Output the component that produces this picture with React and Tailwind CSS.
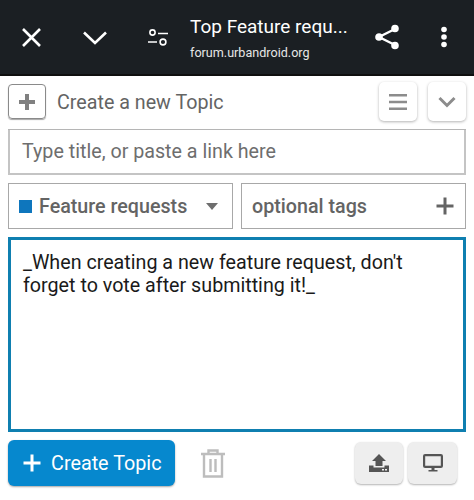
import React from "react";

function GhostButton({ children }) {
    return (
        <div className="w-[38px] h-[39px] rounded-[5px] bg-white shadow-[0_1px_3px_rgba(0,0,0,0.3)] flex items-center justify-center">
            {children}
        </div>
    );
}

function UploadButton({ children, className }) {
    return (
        <div className={"h-[42px] rounded-[6px] bg-[#eeeeee] shadow-[0_1px_2px_rgba(0,0,0,0.3)] flex items-center justify-center " + className}>
            {children}
        </div>
    );
}

export default function App() {
    return (
        <div className="w-[474px] h-[500px] bg-white overflow-hidden font-['Roboto',sans-serif]">
            <header className="h-[76px] bg-[#1b1f23] border-b-2 border-[#0f0f0f] flex items-center text-white">
                <svg width="19" height="19" viewBox="0 0 19 19" className="ml-[22px] mt-[1px]" fill="none" stroke="white" strokeWidth="2.6">
                    <path d="M1 1L18 18M18 1L1 18" />
                </svg>
                <svg width="24" height="14" viewBox="0 0 24 14" className="ml-[42px] mt-[1px]" fill="none" stroke="white" strokeWidth="2.6">
                    <path d="M1 1.5L12 12L23 1.5" />
                </svg>
                <svg width="20" height="17" viewBox="0 0 20 17" className="ml-[41px]" fill="none" stroke="white" strokeWidth="1.6">
                    <circle cx="4.5" cy="3.5" r="2.6" />
                    <path d="M10 4.5H20M0 13H9" />
                    <circle cx="15" cy="13" r="2.9" />
                </svg>
                <div className="ml-[22px] mt-[3px] w-[170px] flex flex-col">
                    <div className="text-[19px] leading-[24px] whitespace-nowrap">Top Feature requ...</div>
                    <div className="text-[12.6px] leading-[20px] mt-[4px] text-[#e6e6e6] whitespace-nowrap">forum.urbandroid.org</div>
                </div>
                <svg width="26" height="28" viewBox="0 0 26 28" className="ml-[14px]" fill="white" stroke="white" strokeWidth="2.4">
                    <path d="M21 6L5 14L21 22" fill="none" />
                    <circle cx="21" cy="5.5" r="2.6" />
                    <circle cx="5" cy="14" r="2.6" />
                    <circle cx="21" cy="22.5" r="2.6" />
                </svg>
                <svg width="8" height="22" viewBox="0 0 8 22" className="ml-[40px]" fill="white">
                    <circle cx="4" cy="3.5" r="2.8" />
                    <circle cx="4" cy="11" r="2.8" />
                    <circle cx="4" cy="18.5" r="2.8" />
                </svg>
            </header>

            <div className="px-2">
                <div className="h-[54px] border-b border-[#b5b5b5] flex items-center">
                    <div className="w-[38px] h-[35px] mb-[2px] rounded-[4px] border border-[#8a8a8a] shadow-[0_1px_1px_rgba(0,0,0,0.35)] flex items-center justify-center">
                        <svg width="18" height="18" viewBox="0 0 18 18" fill="#808080">
                            <path d="M7 1h4v6h6v4h-6v6H7v-6H1V7h6z" />
                        </svg>
                    </div>
                    <span className="ml-[11px] text-[19.7px] text-[#646464]">Create a new Topic</span>
                    <div className="ml-auto mb-[2px] flex gap-[11px]">
                        <GhostButton>
                            <svg width="18" height="16" viewBox="0 0 18 16" fill="#8c8c8c">
                                <path d="M0 0h18v2.6H0zM0 6.7h18v2.6H0zM0 13.4h18V16H0z" />
                            </svg>
                        </GhostButton>
                        <GhostButton>
                            <svg width="18" height="12" viewBox="0 0 18 12" fill="none" stroke="#8c8c8c" strokeWidth="3">
                                <path d="M1.5 2L9 9.5L16.5 2" />
                            </svg>
                        </GhostButton>
                    </div>
                </div>

                <div className="h-[45px] border-2 border-t-0 border-[#c4c4c4] flex items-center pl-[12px] pt-[1px] text-[19.7px] text-[#6e6e6e]">
                    Type title, or paste a link here
                </div>

                <div className="mt-[8px] flex gap-[8px]">
                    <div className="w-[225px] h-[46px] border border-[#a8a8a8] flex items-center pl-[10px] pr-[14px]">
                        <span className="w-[13px] h-[13px] bg-[#0e76bd]" />
                        <span className="ml-[7px] pt-[1px] text-[19.7px] font-medium text-[#646464]">Feature requests</span>
                        <svg width="12" height="7" viewBox="0 0 12 7" className="ml-auto" fill="#6e6e6e">
                            <path d="M0 0h12L6 7z" />
                        </svg>
                    </div>
                    <div className="flex-1 h-[46px] border border-[#a8a8a8] flex items-center pl-[10px] pr-[11px]">
                        <span className="pt-[1px] text-[19.7px] font-medium text-[#646464]">optional tags</span>
                        <svg width="18" height="18" viewBox="0 0 18 18" className="ml-auto" fill="#646464">
                            <path d="M7.5 0.5h3v7h7v3h-7v7h-3v-7h-7v-3h7z" />
                        </svg>
                    </div>
                </div>

                <div className="mt-[8px] h-[195px] border-[3px] border-[#0f7fb0] pl-[12px] pt-[11px] text-[19.7px] leading-[23px] text-[#1a1a1a]">
                    _When creating a new feature request, don't
                    <br />
                    forget to vote after submitting it!_
                </div>

                <div className="mt-[8px] flex items-center">
                    <div className="w-[167px] h-[46px] rounded-[6px] bg-[#0688ce] shadow-[0_1px_2px_rgba(0,0,0,0.35)] flex items-center pl-[15px] text-white">
                        <svg width="18" height="18" viewBox="0 0 18 18" fill="white">
                            <path d="M7.5 0.5h3v7h7v3h-7v7h-3v-7h-7v-3h7z" />
                        </svg>
                        <span className="ml-[10px] pt-[1px] text-[19.8px]">Create Topic</span>
                    </div>
                    <svg width="24" height="29" viewBox="0 0 24 29" className="ml-[26px]" fill="none" stroke="#bdbdbd" strokeWidth="2.4">
                        <path d="M0 5H24M7.5 5V1.5h9V5M3 5V27.5H21V5M9.5 10V23M14.5 10V23" />
                    </svg>
                    <div className="ml-auto mr-[9px] mt-[-1px] flex gap-[5px]">
                        <UploadButton className="w-[48px]">
                            <svg width="20" height="18" viewBox="0 0 20 18" fill="#555555">
                                <path d="M10 0L17 7H13.5V12H6.5V7H3zM0 11.5H4.5V13.5H15.5V11.5H20V18H0z" />
                                <path d="M13 15h2v1.5h-2zM16 15h2v1.5h-2z" fill="#eeeeee" />
                            </svg>
                        </UploadButton>
                        <UploadButton className="w-[49px]">
                            <svg width="20" height="18" viewBox="0 0 20 18" fill="none">
                                <rect x="1.1" y="1.1" width="17.8" height="11.8" rx="1" stroke="#555555" strokeWidth="2.2" />
                                <path d="M8.5 14h3v2h3v1.5h-9V16h3z" fill="#555555" />
                            </svg>
                        </UploadButton>
                    </div>
                </div>
            </div>
        </div>
    );
}
